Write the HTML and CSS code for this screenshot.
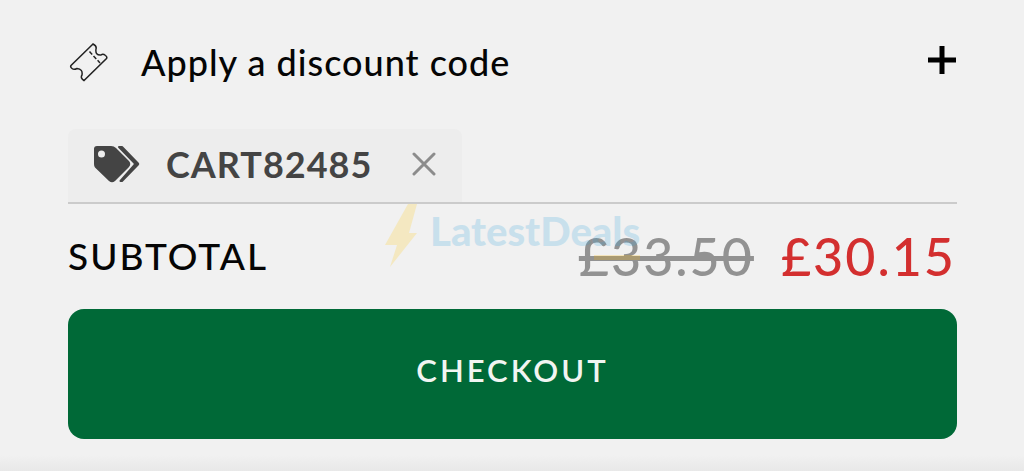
FILE: index.html
```
<!DOCTYPE html>
<html lang="en">
<head>
<meta charset="utf-8">
<meta name="viewport" content="width=device-width, initial-scale=1">
<title>Basket summary</title>
<link rel="stylesheet" href="styles.css">
</head>
<body>
<main class="summary">
  <button class="discount" type="button" aria-expanded="false">
    <svg class="ticket" viewBox="0 0 40 40" aria-hidden="true">
      <path d="M24 2 L2 23.500 Q1 25 3 26.500 Q5 28 8 26.500 Q14 27 13 33 Q11 36 15 38.500 L37.500 16.500 Q38.500 15 36.500 13.500 Q34 11.500 32 13 Q26 13.500 27 7 Q28 4 24 2 Z"/>
      <path class="perforation" d="M20.500 9.500 L31 21"/>
    </svg>
    <span class="discount-label">Apply a discount code</span>
    <svg class="plus" viewBox="0 0 28 28" aria-hidden="true"><path d="M14 0V28M0 14H28"/></svg>
  </button>
  <div class="codes">
    <div class="code">
      <svg class="tags" viewBox="0 0 47 38" aria-hidden="true">
        <path d="M4 1H18Q21 1 23 3L36 16Q38.500 19 36 22L22 36Q19 38.500 16 36L2 22.500Q1 21 1 19V4Q1 1 4 1ZM8.500 5.500A3.500 3.500 0 1 0 8.500 12.500A3.500 3.500 0 1 0 8.500 5.500Z" fill-rule="evenodd"/>
        <path class="tag-back" d="M26 2H29L45 18.500Q45.500 19 45 19.500L29 36H27.500L41.500 20Q42 19 41.500 18Z"/>
      </svg>
      <span>CART82485</span>
      <button class="remove" type="button" aria-label="Remove code">
        <svg viewBox="0 0 24 24" aria-hidden="true"><path d="M2 2L22 22M22 2L2 22"/></svg>
      </button>
    </div>
  </div>
  <div class="subtotal">
    <span class="subtotal-label">SUBTOTAL</span>
    <span class="prices"><s class="was">£33.50</s><span class="now">£30.15</span></span>
    <div class="watermark" aria-hidden="true">
      <svg class="bolt" viewBox="0 0 34 64"><path d="M24 0H33L25 29H33L6 63L13 41H1Z"/></svg>
      <span>LatestDeals</span>
      <i class="watermark-dash"></i>
    </div>
  </div>
  <button class="checkout" type="button">CHECKOUT</button>
</main>
</body>
</html>
```
FILE: styles.css
```
* {
  box-sizing: border-box;
}

body {
  margin: 0;
  min-height: 100vh;
  background: linear-gradient(to top, #e8e8e8, #f1f1f1 16px);
  color: #050505;
  font-family: Lato, "Open Sans", sans-serif;
}

button {
  border: 0;
  padding: 0;
  background: none;
  color: inherit;
  font: inherit;
  cursor: pointer;
}

.summary {
  padding: 32px 67px 32px 68px;
}

.discount {
  display: flex;
  align-items: center;
  width: 100%;
  height: 60px;
  text-align: left;
}

.ticket {
  width: 40px;
  height: 42px;
  margin-left: 1px;
  fill: none;
  stroke: #222;
  stroke-width: 1.500;
}

.perforation {
  stroke-dasharray: 4 2;
}

.discount-label {
  flex: 1;
  margin-left: 32px;
  font-size: 36px;
  font-weight: 500;
  letter-spacing: 1px;
}

.plus {
  width: 28px;
  height: 28px;
  margin: 0 1px 4px 0;
  stroke: #000;
  stroke-width: 5;
}

.codes {
  display: flex;
  margin-top: 37px;
  border-bottom: 2px solid #cbcbcb;
}

.code {
  display: flex;
  align-items: center;
  height: 73px;
  padding: 0 26px 4px 25px;
  border-radius: 8px 8px 0 0;
  background: #ededed;
  color: #444;
  font-size: 36px;
  font-weight: 700;
  letter-spacing: 1px;
}

.tags {
  width: 47px;
  height: 38px;
  margin-right: 26px;
  fill: #444;
}

.tag-back {
  stroke: #444;
  stroke-width: 2;
  stroke-linejoin: round;
}

.remove {
  display: flex;
  margin-left: 40px;
}

.remove svg {
  width: 24px;
  height: 24px;
  stroke: #8c8c8c;
  stroke-width: 3;
  stroke-linecap: round;
}

.subtotal {
  position: relative;
  display: flex;
  align-items: center;
  justify-content: space-between;
  height: 105px;
  padding-bottom: 2px;
}

.subtotal-label {
  font-size: 37px;
  font-weight: 500;
  letter-spacing: 2px;
}

.prices {
  display: flex;
  gap: 27px;
  padding-right: 1px;
  font-size: 52px;
  font-weight: 500;
  letter-spacing: 2px;
}

.was {
  color: #929292;
}

.now {
  color: #d32f2f;
}

.watermark {
  position: absolute;
  top: 0;
  left: 316px;
  display: flex;
  color: #3ba5dc;
  font-size: 40px;
  font-weight: 900;
  line-height: 54px;
  opacity: 0.22;
  pointer-events: none;
}

.bolt {
  width: 34px;
  height: 64px;
  margin-right: 12px;
  fill: #ffcd1c;
}

.watermark-dash {
  position: absolute;
  top: 51px;
  right: 0;
  width: 46px;
  height: 5px;
  background: #ffb800;
}

.checkout {
  display: block;
  width: 100%;
  height: 130px;
  padding-bottom: 8px;
  border-radius: 16px;
  background: #006937;
  color: #f1f5f2;
  font-size: 31px;
  font-weight: 600;
  letter-spacing: 3px;
}
```
